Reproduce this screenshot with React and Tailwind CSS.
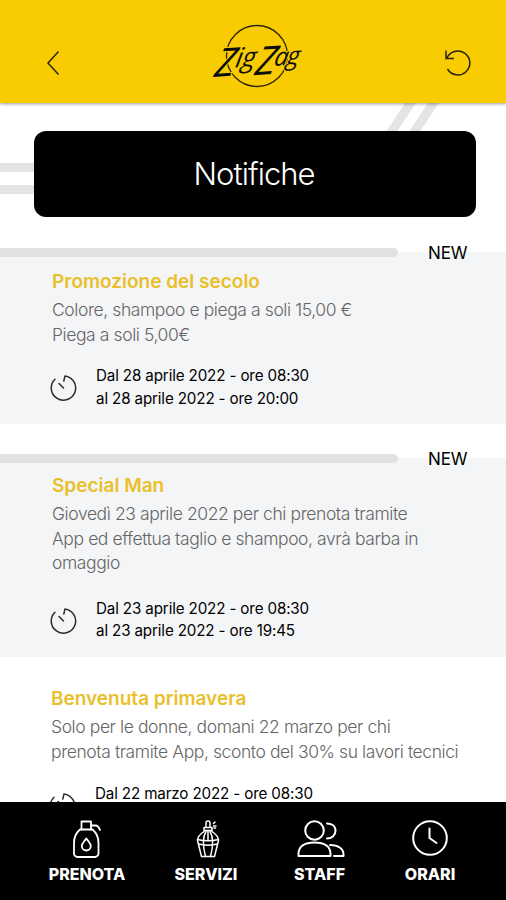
import React from 'react';

const NOTIFICHE = [
  {
    title: 'Promozione del secolo',
    lines: ['Colore, shampoo e piega a soli 15,00 €', 'Piega a soli 5,00€'],
    dates: ['Dal 28 aprile 2022 - ore 08:30', 'al 28 aprile 2022 - ore 20:00'],
    isNew: true,
    box: 'mt-[35px] h-[172px] pt-[18px]',
    when: 'mt-[18px]',
  },
  {
    title: 'Special Man',
    lines: [
      'Giovedì 23 aprile 2022 per chi prenota tramite',
      'App ed effettua taglio e shampoo, avrà barba in',
      'omaggio',
    ],
    dates: ['Dal 23 aprile 2022 - ore 08:30', 'al 23 aprile 2022 - ore 19:45'],
    isNew: true,
    box: 'mt-[34px] h-[199px] pt-[16px]',
    when: 'mt-[22px]',
  },
  {
    title: 'Benvenuta primavera',
    lines: ['Solo per le donne, domani 22 marzo per chi', 'prenota tramite App, sconto del 30% su lavori tecnici'],
    dates: ['Dal 22 marzo 2022 - ore 08:30'],
    isNew: false,
    box: 'h-[172px] pt-[30px] -ml-px',
    when: 'mt-[19px]',
  },
];

function Logo() {
  return (
    <svg width="96" height="70" viewBox="0 0 96 70" fill="none" className="ml-[9px] overflow-visible">
      <circle cx="48" cy="35" r="30.5" stroke="#2b2408" strokeWidth="1.3" />
      <text
        transform="rotate(-4 48 35) skewX(-14)"
        fill="#0d0d0d"
        stroke="#f8cc00"
        strokeWidth="2"
        paintOrder="stroke"
        className="font-['Open_Sans',sans-serif] text-[39px] font-medium italic"
      >
        <tspan x="16" y="53">Z</tspan>
        <tspan x="36" y="45" className="text-[27px] tracking-[-0.5px]">ig </tspan>
        <tspan x="57" y="54">Z</tspan>
        <tspan x="75" y="46" className="text-[25px] tracking-[-1.5px]">ag</tspan>
      </text>
    </svg>
  );
}

function TimerIcon() {
  return (
    <svg width="28" height="28" viewBox="0 0 28 28" fill="none" stroke="#2a2a2a" strokeWidth="1.5" strokeLinecap="round" strokeLinejoin="round">
      <path d="M5 5.2A12.2 12.2 0 1 0 15 1.9L13.8 7" />
      <path d="M9 9.5l4.5 4.5" />
    </svg>
  );
}

function PrenotaIcon() {
  return (
    <svg width="30" height="38" viewBox="0 0 30 38" fill="none" stroke="white" strokeWidth="1.8" strokeLinejoin="round" strokeLinecap="round">
      <path d="M9.5 9.5V1.5h9.5v8" />
      <path d="M8 9.5h12.5c3.5 3 6 8 6 13.5v10.5a3.5 3.5 0 0 1-3.5 3.5H5.5a3.5 3.5 0 0 1-3.5-3.5V23c0-5.5 2.5-10.5 6-13.5z" />
      <path d="M19 5.5h4.500c2.500 0 3.500 2 4.500 4.500" />
      <path d="M14.300 18.500c2.500 3.500 4.500 5 4.500 7.500a4.500 4.500 0 0 1-9 0c0-2.500 2-4 4.500-7.500z" />
    </svg>
  );
}

function ServiziIcon() {
  return (
    <svg width="24" height="38" viewBox="0 0 24 38" fill="none" stroke="white" strokeWidth="1.5" strokeLinejoin="round" strokeLinecap="round" className="ml-[3px]">
      <path d="M10 7V3a2 2 0 0 1 4 0v4M8 7.5h8v3H8z" />
      <path d="M17.5 3.5L19 2M17.5 6h2.5M18 8h1.5" />
      <path d="M8 11.5c-3 2-6.5 4.5-6.5 9l4 16h13l4-16c0-4.5-3.5-7-6.5-9" />
      <path d="M1.5 19.5c6 1.5 15 1.5 21 0M2.5 24c5 1.5 14 1.5 19 0" />
      <path d="M10 11.5C6.5 17 7 27 9.5 36.5M14 11.5c3.5 5.5 3 15.5.5 25M12 11.5v9" />
    </svg>
  );
}

function StaffIcon() {
  return (
    <svg width="48" height="38" viewBox="0 0 48 38" fill="none" stroke="white" strokeWidth="2" strokeLinejoin="round" strokeLinecap="round" className="ml-[3px]">
      <circle cx="17.5" cy="10.5" r="9.3" />
      <path d="M1.5 36v-2c0-7.500 6-11.500 16-11.500s16 4 16 11.500v2z" />
      <path d="M30 3.500c4.500 0 8.500 2.500 8.500 7.300s-4 7.700-8.500 7.700" />
      <path d="M33 25c8 0 13.500 3.500 13.500 9.500v1.500h-9.500" />
    </svg>
  );
}

function OrariIcon() {
  return (
    <svg width="38" height="38" viewBox="0 0 38 38" fill="none" stroke="white" strokeWidth="2" strokeLinejoin="round" strokeLinecap="round">
      <circle cx="19" cy="18" r="16.8" />
      <path d="M18.500 8.500v9.500l7 5" />
    </svg>
  );
}

const TABS = [
  { label: 'PRENOTA', Icon: PrenotaIcon, width: 'w-[118px]' },
  { label: 'SERVIZI', Icon: ServiziIcon, width: 'w-[120px]' },
  { label: 'STAFF', Icon: StaffIcon, width: 'w-[107px]' },
  { label: 'ORARI', Icon: OrariIcon, width: 'w-[114px]' },
];

function Notifica({ item }) {
  return (
    <article className={`relative px-[52px] ${item.box} ${item.isNew ? 'bg-[#f4f5f7]' : 'bg-white'}`}>
      {item.isNew && (
        <>
          <div className="absolute -top-1 left-0 h-[9px] w-[398px] rounded-r-full bg-[#e1e3e3]" />
          <span className="absolute -top-2.5 left-[428px] text-[17px] leading-[22px] tracking-[-0.1px] text-black">NEW</span>
        </>
      )}
      <h2 className="text-[19px] leading-6 font-semibold text-[#e9bf2b]">{item.title}</h2>
      <div className="mt-1 text-[17.5px] leading-[24.5px] font-light tracking-[-0.41px] whitespace-nowrap text-[#666]">
        {item.lines.map((line) => (
          <p key={line}>{line}</p>
        ))}
      </div>
      <div className={`flex items-start ${item.when}`}>
        <div className="-ml-0.5 pt-[9px]">
          <TimerIcon />
        </div>
        <div className="ml-[18px] text-[15.2px] leading-[22.5px] tracking-[-0.15px] whitespace-nowrap text-black">
          {item.dates.map((date) => (
            <p key={date}>{date}</p>
          ))}
        </div>
      </div>
    </article>
  );
}

export default function App() {
  return (
    <div className="flex h-[900px] w-[506px] flex-col overflow-hidden bg-white font-['Inter',sans-serif]">
      <header className="relative z-10 flex h-[103px] shrink-0 items-center justify-between bg-[#f8cc00] pt-[9px] pr-[34px] pl-[46px] shadow-[0_1px_3px_rgba(0,0,0,0.4)]">
        <svg width="14" height="26" viewBox="0 0 14 26" fill="none" stroke="#2b2408" strokeWidth="1.5" className="mt-3.5">
          <path d="M12.5 1.5L2 13l10.5 11.5" />
        </svg>
        <Logo />
        <svg width="28" height="28" viewBox="0 0 28 28" fill="none" stroke="#2b2408" strokeWidth="1.5" className="mt-3.5">
          <path d="M2.7 9.5A12 12 0 1 1 3.5 20" />
          <path d="M2 1.5v8h8" />
        </svg>
      </header>

      <main className="relative min-h-0 flex-1 overflow-hidden pt-7">
        <svg className="absolute top-0 left-0" width="506" height="114" fill="none" stroke="#e2e4e5" strokeWidth="9">
          <path d="M0 64.5h60M0 86.5h60" />
          <path d="M413 -4L388 34M436 -4L411 34" />
        </svg>
        <div className="relative mr-[30px] ml-[34px] flex h-[86px] items-center justify-center rounded-xl bg-black">
          <h1 className="-ml-0.5 text-[31px] font-light tracking-[-1px] text-white">Notifiche</h1>
        </div>
        {NOTIFICHE.map((item) => (
          <Notifica key={item.title} item={item} />
        ))}
      </main>

      <nav className="flex h-[98px] shrink-0 bg-black pt-[18px] pl-7 text-white">
        {TABS.map(({ label, Icon, width }) => (
          <div key={label} className={`flex flex-col items-center ${width}`}>
            <Icon />
            <span className="mt-1.5 text-[16px] leading-5 font-extrabold">{label}</span>
          </div>
        ))}
      </nav>
    </div>
  );
}
